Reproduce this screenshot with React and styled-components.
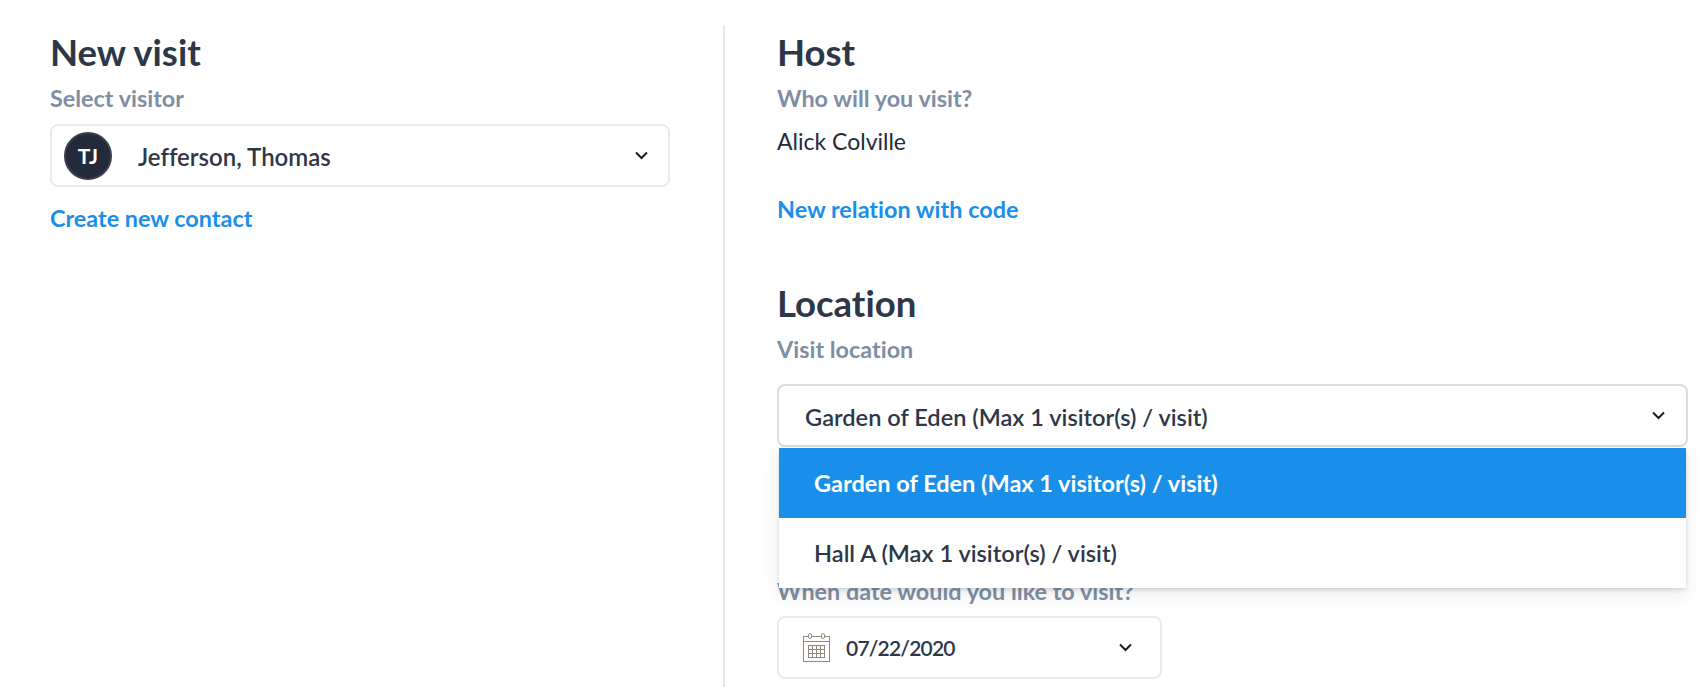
import React from "react";
import styled, { createGlobalStyle } from "styled-components";

const Global = createGlobalStyle`
  html, body { margin: 0; padding: 0; background: #fff; }
  body { font-family: "Lato", "Noto Sans", sans-serif; overflow: hidden; height: 687px; font-variant-ligatures: none; }
  * { box-sizing: border-box; }
`;

const Page = styled.main`
  display: grid;
  grid-template-columns: 725px 1fr;
  height: 687px;
  padding-top: 25px;
`;
const LeftColumn = styled.section`
  border-right: 2px solid #e6e8ec;
  padding: 2px 53px 0 50px;
`;
const RightColumn = styled.section`
  padding: 2px 12px 0 52px;
`;
const Block = styled.div`
  margin-bottom: ${(p) => p.$gap || 0}px;
`;
const Heading = styled.h2`
  margin: 0;
  font-size: 36.5px;
  line-height: 50px;
  font-weight: 700;
  color: #2d3748;
`;
const Label = styled.div`
  font-size: 23.4px;
  line-height: 30px;
  margin-top: ${(p) => p.$top ?? 6}px;
  font-weight: 700;
  color: #7f8ea3;
`;
const Plain = styled.div`
  font-size: 23px;
  line-height: 30px;
  margin-top: 13px;
  color: #232b3b;
`;
const Link = styled.a`
  display: block;
  font-size: 23.4px;
  line-height: 30px;
  font-weight: 700;
  color: #1a8fea;
  margin-top: ${(p) => p.$top}px;
`;
const Select = styled.div`
  position: relative;
  display: flex;
  align-items: center;
  height: 63px;
  width: ${(p) => p.$w || "100%"};
  margin-top: ${(p) => p.$top || 0}px;
  padding: 0 ${(p) => p.$pr || 20}px 0 ${(p) => p.$pl || 12}px;
  border: 2px solid ${(p) => p.$border || "#e8eaee"};
  border-radius: 8px;
  background: #fff;
  color: #2d3748;
  font-size: ${(p) => p.$size || 24}px;
  font-weight: 600;
`;
const Avatar = styled.div`
  flex: none;
  width: 48px;
  height: 48px;
  border-radius: 50%;
  background: #232a3a;
  border: 2px solid #3d3c50;
  color: #fff;
  display: grid;
  place-items: center;
  font-size: 21px;
  font-weight: 700;
`;
const Value = styled.span`
  flex: 1;
  padding: 2px 0 0 ${(p) => p.$pl || 0}px;
  white-space: nowrap;
`;
const DateValue = styled.span`
  flex: 1;
  font-size: 21px;
  letter-spacing: -0.8px;
  white-space: nowrap;
`;
const Menu = styled.ul`
  position: absolute;
  z-index: 2;
  left: 0;
  right: 0;
  top: 62px;
  margin: 0;
  padding: 0;
  list-style: none;
  background: #fff;
  box-shadow: 0 2px 4px rgba(45, 55, 72, 0.16), 0 6px 16px rgba(45, 55, 72, 0.1);
`;
const Option = styled.li`
  height: 70px;
  padding-left: 35px;
  display: flex;
  align-items: center;
  font-size: ${(p) => (p.$active ? 23.5 : 23.6)}px;
  font-weight: ${(p) => (p.$active ? 700 : 600)};
  background: ${(p) => (p.$active ? "#1a8fea" : "#fff")};
  color: ${(p) => (p.$active ? "#fff" : "#2d3748")};
`;
const DateIcon = styled.svg`
  flex: none;
  width: 28px;
  height: 29px;
  margin-right: 15px;
`;

const Chevron = () => (
  <svg width="13" height="9" viewBox="0 0 13 9" fill="none">
    <path d="M1 1.5 L6.5 7 L12 1.5" stroke="#1a1a1a" strokeWidth="2" />
  </svg>
);

const Calendar = () => (
  <DateIcon viewBox="0 0 28 29" fill="none" stroke="#94897e" strokeWidth="1">
    <rect x="0.5" y="3.5" width="26" height="25" />
    <path d="M0.5 8.5 H26.5" />
    <rect x="5.5" y="0.5" width="3" height="5" rx="1.5" fill="#fff" />
    <rect x="18.5" y="0.5" width="3" height="5" rx="1.5" fill="#fff" />
    <rect x="5.5" y="12.5" width="16" height="12" />
    <path d="M9.5 12.5 V24.5 M13.5 12.5 V24.5 M17.5 12.5 V24.5 M5.5 16.5 H21.5 M5.5 20.5 H21.5" />
  </DateIcon>
);

export default function App() {
  return (
    <Page>
      <Global />
      <LeftColumn>
        <Heading>New visit</Heading>
        <Label>Select visitor</Label>
        <Select $top={11}>
          <Avatar>TJ</Avatar>
          <Value $pl={26}>Jefferson, Thomas</Value>
          <Chevron />
        </Select>
        <Link $top={16}>Create new contact</Link>
      </LeftColumn>
      <RightColumn>
        <Block $gap={54}>
          <Heading>Host</Heading>
          <Label>Who will you visit?</Label>
          <Plain>Alick Colville</Plain>
          <Link $top={38}>New relation with code</Link>
        </Block>
        <Heading>Location</Heading>
        <Label>Visit location</Label>
        <Select $top={20} $pl={26} $pr={21} $border="#dcdcdc" $size={23.6}>
          <Value>Garden of Eden (Max 1 visitor(s) / visit)</Value>
          <Chevron />
          <Menu>
            <Option $active>Garden of Eden (Max 1 visitor(s) / visit)</Option>
            <Option>Hall A (Max 1 visitor(s) / visit)</Option>
          </Menu>
        </Select>
        <Label $top={129}>When date would you like to visit?</Label>
        <Select $top={10} $w="385px" $pl={24} $pr={28}>
          <Calendar />
          <DateValue>07/22/2020</DateValue>
          <Chevron />
        </Select>
      </RightColumn>
    </Page>
  );
}
